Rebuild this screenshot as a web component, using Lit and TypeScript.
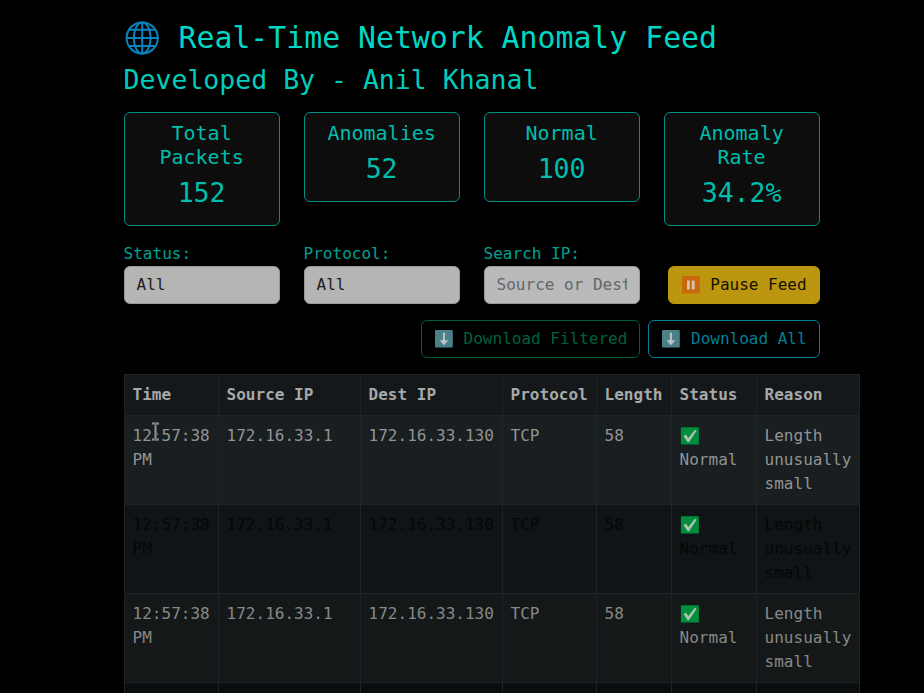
import { LitElement, html, css } from "lit";
import { customElement } from "lit/decorators.js";

const globe = html`<svg class="globe" viewBox="0 0 37 36" fill="none" stroke="#0883be" stroke-width="2">
  <circle cx="18.2" cy="18" r="15.6"/><ellipse cx="18.2" cy="18" rx="8.4" ry="15.6"/>
  <path d="M18.2 2v32M2.4 18h31.6M5.6 9.8h25.2M5.6 26h25.2"/></svg>`;
const pause = html`<svg class="emoji" viewBox="0 0 20 18"><rect x="1" width="17.8" height="17.6" rx="1" fill="#c8690c"/>
  <path d="M6 4.5h2.8v9H6zM10.8 4.5h2.8v9h-2.8z" fill="#d2c4ae"/></svg>`;
const down = html`<svg class="emoji" viewBox="0 0 20 18"><rect x="1" width="17.8" height="17.6" rx="1" fill="#4b8089"/>
  <path d="M8.9 2.7h2v7.5h3.4l-4.4 5-4.4-5h3.4z" fill="#bdc5c5"/></svg>`;
const check = html`<svg class="emoji check" viewBox="0 0 20 18"><rect x=".9" y=".3" width="18" height="17.2" rx=".6" fill="#008d3c"/>
  <path d="M3.6 9.2l2.2-1.6 2.6 3.5L14.8 2.8l1.8 1L9 15.2H7.6z" fill="#aebfae"/></svg>`;

const stats = [["Total Packets", "152"], ["Anomalies", "52"], ["Normal", "100"], ["Anomaly Rate", "34.2%"]];
const heads = ["Time", "Source IP", "Dest IP", "Protocol", "Length", "Status", "Reason"];
const rows = ["first", "second", "third"];

@customElement("app-root")
export class AppRoot extends LitElement {
  static styles = css`
    :host { display: block; height: 693px; overflow: hidden; background: #000; font: 16px/24px "DejaVu Sans Mono", monospace; }
    * { box-sizing: border-box; }
    .container { width: 720px; margin-left: 111.6px; padding: 20px 12px 0; }
    h2, h3, h5, p { margin: 0; font-weight: 400; }
    h2 { display: flex; align-items: center; height: 36px; font-size: 29.82px; line-height: 36px; color: #00d8c6; white-space: pre; }
    .globe { width: 37px; height: 36px; flex: none; }
    h3 { margin-top: 8px; font-size: 26.5px; line-height: 32px; color: #00cdbc; }
    .stats { display: grid; grid-template-columns: repeat(4, minmax(0, 1fr)); gap: 24px; margin-top: 16px; align-items: start; }
    .card { border: 1px solid #008f83; border-radius: 6px; background: #0c0d0c; padding: 8px 16px 16px; text-align: center; color: #00bdae; }
    h5 { font-size: 20px; line-height: 24px; margin-bottom: 8px; }
    .card p { font-size: 26.5px; line-height: 32px; }
    .filters { display: grid; grid-template-columns: repeat(4, minmax(0, 1fr)); gap: 24px; margin-top: 16px; align-items: end; }
    label { display: block; color: #00a093; }
    .control { height: 38px; border: 1px solid #999; border-radius: 6px; padding: 6px 12px; background: #b5b5b3; color: #1d2022; line-height: 24px; }
    .control span { display: block; overflow: hidden; white-space: nowrap; }
    .hint { color: #62676a; background: #b9bab9; }
    button { display: flex; align-items: center; height: 38px; padding: 5px 12px; border: 1px solid; border-radius: 6px; font: inherit; white-space: pre; background: transparent; }
    .pause { justify-self: end; color: #151100; background: #bd960f; border-color: #bd960f; }
    .emoji { width: 20px; height: 18px; flex: none; }
    .downloads { display: flex; justify-content: flex-end; gap: 8px; margin-top: 16px; }
    .filtered { color: #00603e; border-color: #00603e; }
    .all { color: #007f96; border-color: #007f96; }
    table { margin-top: 16px; border-collapse: collapse; table-layout: fixed; width: 736px; }
    th, td { border: 1px solid #1e2325; padding: 8px; text-align: left; vertical-align: top; }
    th { color: #a7a9a9; background: #14181a; font-weight: 700; }
    td { color: #919494; background: #191e20; }
    .second td { color: #040708; background: #101416; }
    .third td { color: #868888; background: #141818; }
    .next td { height: 40px; background: #0b0e0f; }
    .check { display: block; height: 18px; margin: 2.5px 0 3.5px; }
    .pointer { position: absolute; left: 151px; top: 422px; width: 9px; height: 19px; }
  `;

  render() {
    return html`<main class="container">
      <h2>${globe} Real-Time Network Anomaly Feed</h2>
      <h3>Developed By - Anil Khanal</h3>
      <section class="stats">${stats.map(([t, n]) => html`<div class="card"><h5>${t}</h5><p>${n}</p></div>`)}</section>
      <section class="filters">
        <div><label>Status:</label><div class="control">All</div></div>
        <div><label>Protocol:</label><div class="control">All</div></div>
        <div><label>Search IP:</label><div class="control hint"><span>Source or Destination</span></div></div>
        <button class="pause">${pause} Pause Feed</button>
      </section>
      <div class="downloads"><button class="filtered">${down} Download Filtered</button><button class="all">${down} Download All</button></div>
      <table>
        <colgroup><col style="width:94px"><col style="width:142px"><col style="width:142px"><col style="width:94px"><col style="width:75px"><col style="width:85px"><col style="width:103px"></colgroup>
        <thead><tr>${heads.map((h) => html`<th>${h}</th>`)}</tr></thead>
        <tbody>${rows.map((r) => html`<tr class=${r}><td>12:57:38 PM</td><td>172.16.33.1</td><td>172.16.33.130</td><td>TCP</td><td>58</td><td>${check}Normal</td><td>Length unusually small</td></tr>`)}
          <tr class="next">${heads.map(() => html`<td></td>`)}</tr></tbody>
      </table>
    </main>
    <svg class="pointer" viewBox="0 0 9 19" fill="none"><path d="M1 1.5h2.5l1 1 1-1H8M4.5 2.5v14M1 17.5h2.5l1-1 1 1H8" stroke="#5c6060" stroke-width="3"/><path d="M1 1.5h2.5l1 1 1-1H8M4.5 2.5v14M1 17.5h2.5l1-1 1 1H8" stroke="#8b8f8f" stroke-width="1"/></svg>`;
  }
}
